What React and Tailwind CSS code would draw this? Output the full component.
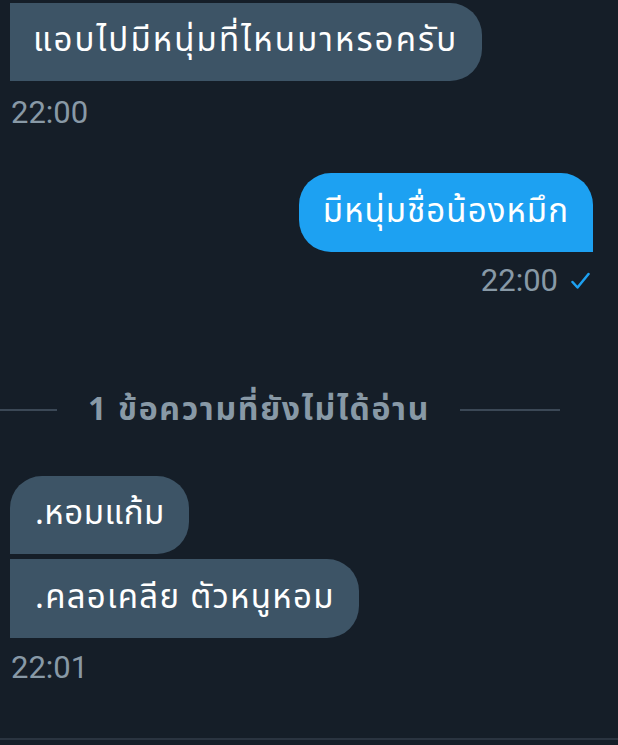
export default function App() {
  const thai = { fontFamily: '"Noto Sans Thai", "Noto Sans", Roboto, sans-serif' };
  const bubble = 'flex w-fit items-center text-[33px] text-white';
  const time = 'text-[31px] leading-[36px] text-[#8899a6] [font-family:Roboto,sans-serif]';
  return (
    <div className="flex h-[745px] w-[618px] flex-col overflow-hidden bg-[#151e28]" style={thai}>
      <div className={`${bubble} ml-[10px] mt-[3px] h-[78px] rounded-r-[32px] bg-[#3d5466] pl-[23px] pr-[24px] tracking-[2.1px]`}>
        แอบไปมีหนุ่มที่ไหนมาหรอครับ
      </div>
      <div className={`${time} ml-[11px] mt-[14px]`}>22:00</div>

      <div className={`${bubble} mr-[25px] mt-[42px] h-[79px] self-end rounded-[32px] rounded-br-none bg-[#1da1f2] px-[24px] tracking-[1.05px]`}>
        มีหนุ่มชื่อน้องหมึก
      </div>
      <div className={`${time} mr-[28px] mt-[11px] flex items-center gap-[13px] self-end`}>
        <span>22:00</span>
        <svg width="19" height="18" viewBox="0 0 19 18" fill="none">
          <path d="M1.5 10 L6.5 15.5 L17.5 2" stroke="#1da1f2" strokeWidth="2.5" strokeLinecap="round" strokeLinejoin="round" />
        </svg>
      </div>

      <div className="mt-[91px] flex h-[40px] items-center">
        <div className="h-[2px] w-[57px] bg-[#3b4856]" />
        <div className="ml-[31px] text-[32px] font-bold tracking-[1.7px] text-[#8899a6]">1 ข้อความที่ยังไม่ได้อ่าน</div>
        <div className="ml-[30px] h-[2px] w-[100px] bg-[#3b4856]" />
      </div>

      <div className={`${bubble} ml-[10px] mt-[46px] h-[78px] rounded-r-[32px] rounded-tl-[32px] bg-[#3d5466] pl-[25px] pr-[24px] tracking-[0.5px]`}>
        .หอมแก้ม
      </div>
      <div className={`${bubble} ml-[10px] mt-[5px] h-[79px] rounded-r-[32px] bg-[#3d5466] pl-[25px] pr-[24px] tracking-[1.3px]`}>
        .คลอเคลีย ตัวหนูหอม
      </div>
      <div className={`${time} ml-[11px] mt-[12px]`}>22:01</div>

      <div className="mt-auto mb-[5px] h-[2px] w-full bg-[#2a3440]" />
    </div>
  );
}
